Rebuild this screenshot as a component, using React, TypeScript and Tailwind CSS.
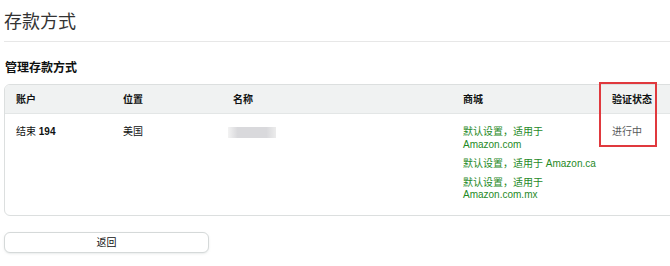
const FONT = "font-['Liberation_Sans','Noto_Sans_CJK_SC',sans-serif]";

const COLS = "grid grid-cols-[107px_110px_230px_149px_1fr]";

const MARKETS = [
  ["默认设置，适用于", "Amazon.com"],
  ["默认设置，适用于 Amazon.ca"],
  ["默认设置，适用于", "Amazon.com.mx"],
];

export default function App() {
  return (
    <div className={`${FONT} h-[266px] w-[670px] overflow-hidden bg-white text-[#0f1111]`}>
      <div className="pl-1">
        <h1 className="pt-[10px] pb-[7px] text-[18px] leading-[24px] text-[#333]">存款方式</h1>
        <div className="h-px w-[700px] bg-[#e7e7e7]" />

        <h2 className="mt-[18px] pl-px text-[12px] font-bold leading-[16px]">管理存款方式</h2>

        <div className="relative mt-[8px] w-[720px]">
          <div className="overflow-hidden rounded-[6px] border border-[#dcdfdf]">
            <div className={`${COLS} h-[29px] items-center border-b border-[#e3e6e6] bg-[#f0f2f2] pl-[11px] text-[10px] font-semibold`}>
              <span>账户</span>
              <span>位置</span>
              <span>名称</span>
              <span>商城</span>
              <span>验证状态</span>
            </div>
            <div className={`${COLS} pl-[11px] pt-[12px] pb-[13px] text-[10px] leading-[12.5px]`}>
              <span>
                结束 <b className="font-bold">194</b>
              </span>
              <span>美国</span>
              <div className="pt-[1px]">
                <div className="-ml-[5px] h-[11px] w-[48px] bg-[linear-gradient(to_right,#f3f3f3,#d9d9dc_20%,#d9d9dc_80%,#ececec)]" />
              </div>
              <div className="flex flex-col gap-[6.5px] text-[#1f8a1f]">
                {MARKETS.map((lines, i) => (
                  <div key={i}>
                    {lines.map((l) => (
                      <div key={l}>{l}</div>
                    ))}
                  </div>
                ))}
              </div>
              <span className="text-[#565959]">进行中</span>
            </div>
          </div>
          <div className="absolute left-[595px] top-[-2px] h-[65px] w-[58px] border-2 border-[#e0393e]" />
        </div>

        <button className="mt-[16px] h-[21px] w-[205px] rounded-[6px] border border-[#d5d9d9] bg-white text-[10px] shadow-[0_1px_2px_rgba(213,217,217,0.5)]">
          返回
        </button>
      </div>
    </div>
  );
}
